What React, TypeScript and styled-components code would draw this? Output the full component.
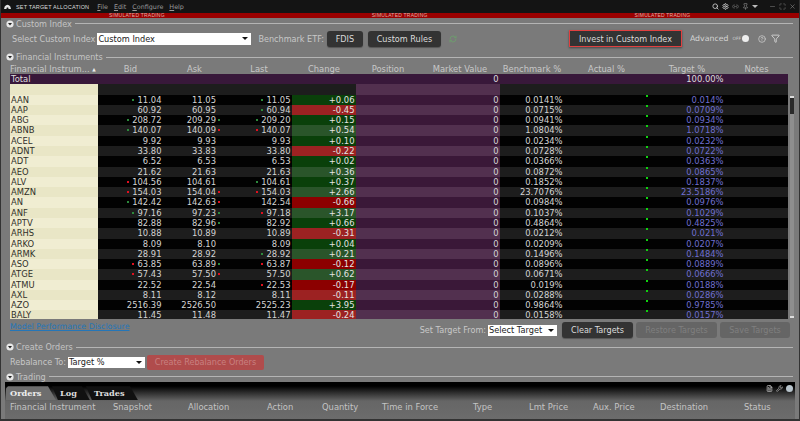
import React from "react";
import styled, { createGlobalStyle } from "styled-components";
import { Search, Settings, Link2, Pin, Minus, Maximize, X, RefreshCw, CircleHelp, Filter, FileText, Wrench } from "lucide-react";

const GlobalStyle = createGlobalStyle`
    html, body {
        margin: 0;
        padding: 0;
        background: #2b2b2b;
    }
    * {
        box-sizing: border-box;
    }
`

type Tick = "g" | "r" | undefined;

interface IRow {
    sym: string,
    bid: string,
    ask: string,
    last: string,
    change: string,
    bench: string,
    target: string,
    bidTick?: Tick,
    askTick?: Tick,
    lastTick?: Tick,
}

const rows: IRow[] = [
    { sym: "AAN", bid: "11.04", ask: "11.05", last: "11.05", change: "+0.06", bench: "0.0141%", target: "0.014%", bidTick: "g", lastTick: "g" },
    { sym: "AAP", bid: "60.92", ask: "60.95", last: "60.94", change: "-0.45", bench: "0.0715%", target: "0.0709%", lastTick: "g" },
    { sym: "ABG", bid: "208.72", ask: "209.29", last: "209.20", change: "+0.15", bench: "0.0941%", target: "0.0934%", bidTick: "g", askTick: "g", lastTick: "g" },
    { sym: "ABNB", bid: "140.07", ask: "140.09", last: "140.07", change: "+0.54", bench: "1.0804%", target: "1.0718%", bidTick: "g", askTick: "r", lastTick: "r" },
    { sym: "ACEL", bid: "9.92", ask: "9.93", last: "9.93", change: "+0.10", bench: "0.0234%", target: "0.0232%" },
    { sym: "ADNT", bid: "33.80", ask: "33.83", last: "33.80", change: "-0.22", bench: "0.0728%", target: "0.0722%" },
    { sym: "ADT", bid: "6.52", ask: "6.53", last: "6.53", change: "+0.02", bench: "0.0366%", target: "0.0363%" },
    { sym: "AEO", bid: "21.62", ask: "21.63", last: "21.63", change: "+0.36", bench: "0.0872%", target: "0.0865%" },
    { sym: "ALV", bid: "104.56", ask: "104.61", last: "104.61", change: "+0.37", bench: "0.1852%", target: "0.1837%", bidTick: "r", lastTick: "g" },
    { sym: "AMZN", bid: "154.03", ask: "154.04", last: "154.03", change: "+2.66", bench: "23.7076%", target: "23.5186%", bidTick: "r", askTick: "r", lastTick: "r" },
    { sym: "AN", bid: "142.42", ask: "142.63", last: "142.54", change: "-0.66", bench: "0.0984%", target: "0.0976%", bidTick: "g", askTick: "r" },
    { sym: "ANF", bid: "97.16", ask: "97.23", last: "97.18", change: "+3.17", bench: "0.1037%", target: "0.1029%", bidTick: "g", askTick: "g", lastTick: "r" },
    { sym: "APTV", bid: "82.88", ask: "82.96", last: "82.92", change: "+0.66", bench: "0.4864%", target: "0.4825%", askTick: "g" },
    { sym: "ARHS", bid: "10.88", ask: "10.89", last: "10.89", change: "-0.31", bench: "0.0212%", target: "0.021%" },
    { sym: "ARKO", bid: "8.09", ask: "8.10", last: "8.09", change: "+0.04", bench: "0.0209%", target: "0.0207%" },
    { sym: "ARMK", bid: "28.91", ask: "28.92", last: "28.92", change: "+0.21", bench: "0.1496%", target: "0.1484%", lastTick: "g" },
    { sym: "ASO", bid: "63.85", ask: "63.89", last: "63.87", change: "-0.12", bench: "0.0896%", target: "0.0889%", bidTick: "r", askTick: "g", lastTick: "r" },
    { sym: "ATGE", bid: "57.43", ask: "57.50", last: "57.50", change: "+0.62", bench: "0.0671%", target: "0.0666%", bidTick: "r", askTick: "r" },
    { sym: "ATMU", bid: "22.52", ask: "22.54", last: "22.53", change: "-0.17", bench: "0.019%", target: "0.0188%", lastTick: "r" },
    { sym: "AXL", bid: "8.11", ask: "8.12", last: "8.11", change: "-0.11", bench: "0.0288%", target: "0.0286%" },
    { sym: "AZO", bid: "2516.39", ask: "2526.50", last: "2525.23", change: "+3.95", bench: "0.9864%", target: "0.9785%" },
    { sym: "BALY", bid: "11.45", ask: "11.48", last: "11.47", change: "-0.24", bench: "0.0158%", target: "0.0157%" },
];

const headers = ["Bid", "Ask", "Last", "Change", "Position", "Market Value", "Benchmark %", "Actual %", "Target %", "Notes"];
const orderHeaders = ["Financial Instrument", "Snapshot", "Allocation", "Action", "Quantity", "Time in Force", "Type", "Lmt Price", "Aux. Price", "Destination", "Status"];

const GRID = "88px 65px 63px 66px 64px 64px 80px 64px 85px 76px 63px";

const CollapseMark = () => (
    <svg width="8" height="8" viewBox="0 0 8 8">
        <circle cx="4" cy="4" r="3.6" fill="#e8e8e8" />
        <path d="M2 3 L6 3 L4 5.6 Z" fill="#222" />
    </svg>
)

const SectionHead = ({ title }: { title: string }) => (
    <SectionTitle>
        <CollapseMark />
        <span>{title}</span>
        <SectionLine />
    </SectionTitle>
)

const PriceCell = ({ value, tick }: { value: string, tick?: Tick }) => (
    <NumCell>
        {tick && <TickDot $tick={tick} />}
        {value}
    </NumCell>
)

export default function App() {
    return (
        <Window>
            <GlobalStyle />
            <TitleBar>
                <svg width="7" height="5" viewBox="0 0 10 7">
                    <path d="M0 7 L1 3.5 Q5 -1.5 9 3.5 L10 7 L6.5 7 L6 5 L4 5 L3.5 7 Z" fill="#e4e4e4" />
                </svg>
                <AppTitle>SET TARGET ALLOCATION</AppTitle>
                <MenuItem><u>F</u>ile</MenuItem>
                <MenuItem><u>E</u>dit</MenuItem>
                <MenuItem><u>C</u>onfigure</MenuItem>
                <MenuItem><u>H</u>elp</MenuItem>
                <TitleTools>
                    <Search size={7} strokeWidth={3} color="#c8c8c8" />
                    <Settings size={7} strokeWidth={3} color="#c8c8c8" />
                    <Link2 size={7} color="#777" />
                    <Pin size={7} color="#999" />
                    <Caret $color="#bbb" />
                    <WindowTools>
                        <Minus size={7} color="#777" />
                        <Maximize size={7} color="#777" />
                        <X size={7} color="#888" />
                    </WindowTools>
                </TitleTools>
            </TitleBar>
            <SimBand>
                <span>SIMULATED TRADING</span>
                <span>SIMULATED TRADING</span>
                <span>SIMULATED TRADING</span>
            </SimBand>

            <TopSection>
                <SectionHead title="Custom Index" />
                <ControlRow>
                    <Label>Select Custom Index</Label>
                    <SelectBox $width={154}>Custom Index<Caret /></SelectBox>
                    <BenchLabel>Benchmark ETF:</BenchLabel>
                    <DarkButton $width={36}>FDIS</DarkButton>
                    <DarkButton $width={73}>Custom Rules</DarkButton>
                    <RefreshCw size={8} color="#6f9a6f" strokeWidth={3} style={{ marginLeft: 8 }} />
                    <InvestButton>Invest in Custom Index</InvestButton>
                    <AdvancedLabel>Advanced</AdvancedLabel>
                    <OffToggle>OFF<Knob /></OffToggle>
                    <CircleHelp size={8} color="#d8d8d8" style={{ marginLeft: 9 }} />
                    <Filter size={9} color="#e4e4e4" style={{ marginLeft: 5 }} />
                </ControlRow>
            </TopSection>

            <Section>
                <SectionHead title="Financial Instruments" />
                <TableArea>
                    <TableWrap>
                        <HeaderRow>
                            <HeaderCell $left>Financial Instrum... <SortMark>▲</SortMark></HeaderCell>
                            {headers.map(h => <HeaderCell key={h}>{h}</HeaderCell>)}
                        </HeaderRow>
                        <TotalRow>
                            <TotalName>Total</TotalName>
                            <TotalValue $span={6}>0</TotalValue>
                            <TotalValue $span={3}>100.00%</TotalValue>
                        </TotalRow>
                        <Body>
                            <DataRow $odd={false}>
                                <NameCell $odd={false} />
                                <BlankSpan $span={4} />
                                <HoldCell $odd={false} />
                                <HoldCell $odd={false} />
                            </DataRow>
                            {rows.map((r, i) => {
                                const odd = i % 2 === 0;
                                return (
                                    <DataRow key={r.sym} $odd={odd}>
                                        <NameCell $odd={odd}>{r.sym}</NameCell>
                                        <PriceCell value={r.bid} tick={r.bidTick} />
                                        <AskCell>
                                            {r.ask}
                                            {r.askTick && <AskDot $tick={r.askTick} />}
                                        </AskCell>
                                        <PriceCell value={r.last} tick={r.lastTick} />
                                        <ChangeCell $odd={odd} $up={r.change[0] === "+"}>{r.change}</ChangeCell>
                                        <HoldCell $odd={odd} />
                                        <HoldCell $odd={odd}>0</HoldCell>
                                        <NumCell>{r.bench}</NumCell>
                                        <ActualCell><GreenMark /></ActualCell>
                                        <TargetCell>{r.target}</TargetCell>
                                        <NumCell />
                                    </DataRow>
                                );
                            })}
                        </Body>
                    </TableWrap>
                    <ScrollTrack>
                        <ScrollEnd />
                        <ScrollThumb />
                        <ScrollEnd />
                    </ScrollTrack>
                </TableArea>
                <TargetBar>
                    <DisclosureLink>Model Performance Disclosure</DisclosureLink>
                    <TargetLabel>Set Target From:</TargetLabel>
                    <SelectBox $width={69} $short>Select Target<Caret /></SelectBox>
                    <DarkButton $width={71}>Clear Targets</DarkButton>
                    <MutedButton $width={81}>Restore Targets</MutedButton>
                    <MutedButton $width={70}>Save Targets</MutedButton>
                </TargetBar>
            </Section>

            <Section>
                <SectionHead title="Create Orders" />
                <RebalanceRow>
                    <Label>Rebalance To:</Label>
                    <SelectBox $width={77} $short>Target %<Caret /></SelectBox>
                    <RebalanceButton>Create Rebalance Orders</RebalanceButton>
                </RebalanceRow>
            </Section>

            <TradingHead>
                <SectionHead title="Trading" />
            </TradingHead>
            <TradingPanel>
                <TabRow>
                    <ActiveTab>Orders</ActiveTab>
                    <BlackTab $width={38}>Log</BlackTab>
                    <BlackTab $width={52}>Trades</BlackTab>
                    <PanelTools>
                        <FileText size={7} color="#eee" />
                        <Wrench size={7} color="#ccc" />
                        <GlobeDot />
                    </PanelTools>
                </TabRow>
                <OrderHeader>
                    {orderHeaders.map(h => <span key={h}>{h}</span>)}
                </OrderHeader>
            </TradingPanel>
        </Window>
    )
}

const Window = styled.div`
    width: 800px;
    height: 421px;
    overflow: hidden;
    display: flex;
    flex-direction: column;
    background: #7a7a7a;
    border: 1px solid #333;
    border-top: 0;
    border-bottom: 2px solid #333;
    font-family: "DejaVu Sans", sans-serif;
    font-size: 8.4px;
    color: #cfcfcf;
`

const TitleBar = styled.div`
    height: 13px;
    flex: none;
    display: flex;
    align-items: center;
    padding: 0 3px 0 3px;
    background: #141414;
    color: #c4c4c4;
`

const AppTitle = styled.span`
    margin: 0 8px 0 5px;
    font-family: "Liberation Sans", sans-serif;
    font-size: 5.5px;
    letter-spacing: 0.18px;
    color: #dcdcdc;
    white-space: nowrap;
`

const MenuItem = styled.span`
    margin-right: 6px;
    font-size: 6.4px;
    color: #9a9a9a;
`

const TitleTools = styled.div`
    margin-left: auto;
    display: flex;
    align-items: center;
    gap: 3px;
`

const WindowTools = styled.div`
    display: flex;
    align-items: center;
    gap: 3px;
    margin-left: 6px;
`

const SimBand = styled.div`
    height: 5px;
    flex: none;
    display: flex;
    padding-left: 108px;
    gap: 207px;
    background: #9a0000;
    color: #e0b0a8;
    font-family: "Liberation Sans", sans-serif;
    font-size: 5px;
    line-height: 5px;
    letter-spacing: 0.22px;
    white-space: nowrap;
`

const Section = styled.section`
    flex: none;
    padding-left: 5px;
    padding-top: 3.5px;
`

const TopSection = styled(Section)`
    padding-top: 0;
`

const SectionTitle = styled.div`
    height: 11px;
    display: flex;
    align-items: center;
    gap: 2px;
    margin-right: 6px;
    color: #c4c4c4;
    font-size: 8.1px;
    white-space: nowrap;
`

const SectionLine = styled.div`
    flex: 1;
    height: 1px;
    margin-left: 1px;
    background: #b4b4b4;
`

const ControlRow = styled.div`
    height: 19px;
    padding-left: 6px;
    display: flex;
    align-items: center;
`

const Label = styled.span`
    color: #c8c8c8;
    font-size: 8.1px;
    white-space: nowrap;
`

const BenchLabel = styled(Label)`
    margin: 0 -2px 0 7px;
`

const SelectBox = styled.div<{ $width: number, $short?: boolean }>`
    width: ${p => p.$width}px;
    height: ${p => p.$short ? 11 : 12}px;
    margin-left: 2px;
    padding: 0 1px;
    display: flex;
    flex: none;
    align-items: center;
    justify-content: space-between;
    background: #fff;
    color: #222;
    font-size: 8.2px;
    white-space: nowrap;
`

const Caret = styled.i<{ $color?: string }>`
    width: 0;
    height: 0;
    margin-right: 2px;
    border-left: 3px solid transparent;
    border-right: 3px solid transparent;
    border-top: 3px solid ${p => p.$color || "#111"};
`

const DarkButton = styled.button<{ $width: number }>`
    width: ${p => p.$width}px;
    height: 16px;
    margin-left: 5px;
    padding: 0;
    flex: none;
    border: 0;
    border-radius: 3px;
    background: #333;
    color: #dcdcdc;
    font-family: inherit;
    font-size: 8.1px;
    box-shadow: 0 1px 1px #555;
    white-space: nowrap;
`

const MutedButton = styled(DarkButton)`
    margin-left: 3px;
    background: #656565;
    color: #7f7f7f;
    box-shadow: none;
`

const InvestButton = styled(DarkButton).attrs({ $width: 113 })`
    height: 17px;
    margin-left: 112px;
    border: 1px solid #e04040;
    border-radius: 0;
    box-shadow: 0 1px 2px #444;
`

const AdvancedLabel = styled(Label)`
    margin-left: 8px;
    font-size: 7.8px;
    color: #d4d4d4;
`

const OffToggle = styled.span`
    display: inline-flex;
    align-items: center;
    margin-left: 4px;
    font-size: 4.4px;
    color: #cfcfcf;
`

const Knob = styled.i`
    width: 7px;
    height: 7px;
    margin-left: 1px;
    border-radius: 50%;
    background: #eee;
`

const TableArea = styled.div`
    display: flex;
    margin-top: 1.5px;
    padding-left: 4px;
`

const TableWrap = styled.div`
    width: 778px;
    flex: none;
`

const HeaderRow = styled.div`
    height: 10px;
    display: grid;
    grid-template-columns: ${GRID};
    line-height: 10px;
    color: #c8c8c8;
    white-space: nowrap;
`

const HeaderCell = styled.div<{ $left?: boolean }>`
    text-align: ${p => p.$left ? "left" : "center"};
`

const SortMark = styled.span`
    font-size: 4.5px;
    color: #eee;
    vertical-align: 1px;
`

const TotalRow = styled.div`
    height: 10.3px;
    display: grid;
    grid-template-columns: ${GRID};
    line-height: 10.3px;
    background: #38183a;
    color: #ddd;
`

const TotalName = styled.div`
    padding-left: 1px;
`

const TotalValue = styled.div<{ $span: number }>`
    grid-column: span ${p => p.$span};
    padding-right: 1.5px;
    text-align: right;
`

const Body = styled.div`
    height: 235px;
    overflow: hidden;
`

const DataRow = styled.div<{ $odd: boolean }>`
    height: 10.286px;
    display: grid;
    grid-template-columns: ${GRID};
    line-height: 10.286px;
    background: ${p => p.$odd ? "#020202" : "#1d1d1d"};
    color: #d4d4d4;
    white-space: nowrap;
`

const NameCell = styled.div<{ $odd: boolean }>`
    padding-left: 1px;
    background: ${p => p.$odd ? "#f0edd2" : "#e9e6c6"};
    color: #30302a;
`

const BlankSpan = styled.div<{ $span: number }>`
    grid-column: span ${p => p.$span};
`

const NumCell = styled.div`
    padding-right: 1.5px;
    text-align: right;
`

const AskCell = styled(NumCell)`
    position: relative;
    padding-right: 10px;
`

const TickDot = styled.i<{ $tick: Tick }>`
    display: inline-block;
    width: 2px;
    height: 2px;
    margin-right: 3.5px;
    vertical-align: 2px;
    background: ${p => p.$tick === "g" ? "#2c8a3c" : "#e01020"};
`

const AskDot = styled(TickDot)`
    position: absolute;
    top: 4px;
    right: 6px;
    margin: 0;
`

const ChangeCell = styled(NumCell)<{ $odd: boolean, $up: boolean }>`
    color: #e4e4e4;
    background: ${p => p.$up
        ? (p.$odd ? "#0a400a" : "#2a552a")
        : (p.$odd ? "#8c0000" : "#9c2222")};
`

const HoldCell = styled(NumCell)<{ $odd: boolean }>`
    background: ${p => p.$odd ? "#3a1838" : "#52304f"};
`

const ActualCell = styled.div`
    position: relative;
`

const GreenMark = styled.i`
    position: absolute;
    top: 0;
    right: 1px;
    width: 2px;
    height: 2px;
    background: #10d010;
`

const TargetCell = styled(NumCell)`
    color: #6f6fd0;
`

const ScrollTrack = styled.div`
    width: 4px;
    height: 222px;
    margin: 32px 0 0 2px;
    flex: none;
    display: flex;
    flex-direction: column;
    background: #8e8e8e;
`

const ScrollEnd = styled.div`
    height: 2px;
    flex: none;
    background: #ddd;
`

const ScrollThumb = styled.div`
    height: 16px;
    flex: none;
    margin-bottom: auto;
    background: #2a2a2a;
`

const TargetBar = styled.div`
    height: 16px;
    margin-top: 3px;
    padding: 0 9px 0 4px;
    display: flex;
    align-items: center;
`

const DisclosureLink = styled.a`
    color: #2476b8;
    text-decoration: underline;
    font-size: 7.9px;
    line-height: 10px;
    white-space: nowrap;
    align-self: flex-start;
`

const TargetLabel = styled(Label)`
    margin-left: auto;
`

const RebalanceRow = styled.div`
    height: 18.5px;
    padding-left: 4px;
    display: flex;
    align-items: center;
`

const RebalanceButton = styled.button`
    width: 117px;
    height: 15px;
    margin-left: 2px;
    padding: 0;
    border: 0;
    border-radius: 2px;
    background: #b04c4c;
    color: #c88080;
    font-family: inherit;
    font-size: 8.1px;
    white-space: nowrap;
`

const TradingHead = styled.div`
    height: 11px;
    flex: none;
    padding-left: 5px;
`

const TradingPanel = styled.div`
    flex: 1;
    margin: 0 4px 0 4px;
    display: flex;
    flex-direction: column;
    background: linear-gradient(#000 0, #000 4px, #666 19px, #6c6c6c 100%);
`

const TabRow = styled.div`
    height: 18px;
    flex: none;
    padding: 4px 0 0 1px;
    display: flex;
    align-items: flex-start;
    font-family: "DejaVu Serif", serif;
    font-weight: 700;
    font-size: 8.2px;
`

const ActiveTab = styled.div`
    width: 50px;
    height: 14px;
    padding: 2px 0 0 4px;
    background: #6e6e6e;
    color: #eee;
    clip-path: polygon(0 2px, 2px 0, 42px 0, 50px 100%, 0 100%);
`

const BlackTab = styled.div<{ $width: number }>`
    width: ${p => p.$width}px;
    height: 14px;
    margin-left: -4px;
    padding: 2px 0 0 8px;
    background: #111;
    color: #ddd;
    clip-path: polygon(0 0, ${p => p.$width - 8}px 0, 100% 100%, 6px 100%);
`

const PanelTools = styled.div`
    margin-left: auto;
    margin-right: 2px;
    margin-top: -1px;
    display: flex;
    align-items: center;
    gap: 3px;
`

const GlobeDot = styled.i`
    width: 7px;
    height: 7px;
    border-radius: 50%;
    background: #b8c4cc;
`

const OrderHeader = styled.div`
    display: grid;
    grid-template-columns: 103px 75px 79px 55px 60px 91px 56px 64px 67px 84px 50px;
    padding: 2px 0 0 5px;
    color: #c4c4c4;
    white-space: nowrap;
`
